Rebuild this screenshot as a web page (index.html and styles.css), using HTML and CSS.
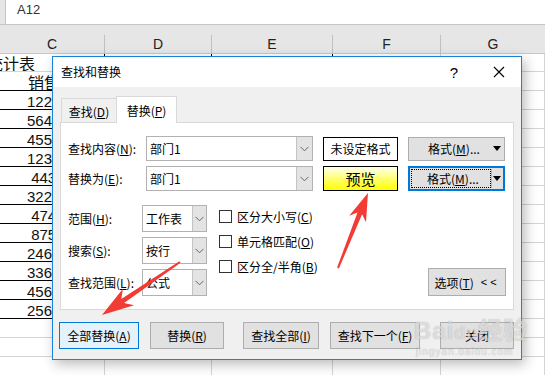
FILE: index.html
```html
<!DOCTYPE html>
<html lang="zh-CN">
<head>
<meta charset="utf-8">
<title>查找和替换</title>
<link rel="stylesheet" href="styles.css">
</head>
<body>
<div class="screen">
  <div class="fbar"><div class="fleft"></div><div class="namebox">A12</div></div>
  <div class="band"></div>
  <div class="colhead">
    <div class="ch">C</div><div class="ch">D</div><div class="ch">E</div><div class="ch">F</div><div class="ch last">G</div>
  </div>
  <div class="cells">
    <div class="row r1"><div class="cell tb"><span class="title">统计表</span></div><div class="cell tb"></div><div class="cell tb"></div><div class="cell"></div><div class="cell"></div></div>
    <div class="row t"><div class="cell tb head">销售额</div><div class="cell tb"></div><div class="cell tb"></div><div class="cell"></div><div class="cell"></div></div>
    <div class="row t"><div class="cell tb num">122350</div><div class="cell tb"></div><div class="cell tb"></div><div class="cell"></div><div class="cell"></div></div>
    <div class="row t"><div class="cell tb num">564120</div><div class="cell tb"></div><div class="cell tb"></div><div class="cell"></div><div class="cell"></div></div>
    <div class="row t"><div class="cell tb num">455300</div><div class="cell tb"></div><div class="cell tb"></div><div class="cell"></div><div class="cell"></div></div>
    <div class="row t"><div class="cell tb num">123560</div><div class="cell tb"></div><div class="cell tb"></div><div class="cell"></div><div class="cell"></div></div>
    <div class="row t"><div class="cell tb num">44320</div><div class="cell tb"></div><div class="cell tb"></div><div class="cell"></div><div class="cell"></div></div>
    <div class="row t"><div class="cell tb num">322450</div><div class="cell tb"></div><div class="cell tb"></div><div class="cell"></div><div class="cell"></div></div>
    <div class="row t"><div class="cell tb num">47410</div><div class="cell tb"></div><div class="cell tb"></div><div class="cell"></div><div class="cell"></div></div>
    <div class="row t"><div class="cell tb num">87560</div><div class="cell tb"></div><div class="cell tb"></div><div class="cell"></div><div class="cell"></div></div>
    <div class="row t"><div class="cell tb num">246780</div><div class="cell tb"></div><div class="cell tb"></div><div class="cell"></div><div class="cell"></div></div>
    <div class="row t"><div class="cell tb num">336900</div><div class="cell tb"></div><div class="cell tb"></div><div class="cell"></div><div class="cell"></div></div>
    <div class="row t"><div class="cell tb num">456210</div><div class="cell tb"></div><div class="cell tb"></div><div class="cell"></div><div class="cell"></div></div>
    <div class="row t"><div class="cell tb num">256340</div><div class="cell tb"></div><div class="cell tb"></div><div class="cell"></div><div class="cell"></div></div>
    <div class="row"><div class="cell"></div><div class="cell"></div><div class="cell"></div><div class="cell"></div><div class="cell"></div></div>
    <div class="row"><div class="cell"></div><div class="cell"></div><div class="cell"></div><div class="cell"></div><div class="cell"></div></div>
    <div class="row"><div class="cell"></div><div class="cell"></div><div class="cell"></div><div class="cell"></div><div class="cell"></div></div>
  </div>

  <div class="dialog">
    <div class="titlebar">
      <div class="dtitle">查找和替换</div>
      <div class="tbtn help">?</div>
      <div class="tbtn close"><svg width="12" height="12" viewBox="0 0 12 12"><path d="M1 1L11 11M11 1L1 11" stroke="#000" stroke-width="1.1" fill="none"/></svg></div>
    </div>
    <div class="dbody">
      <div class="tabs">
        <div class="tab"><span>查找(<u>D</u>)</span></div>
        <div class="tab active"><span>替换(<u>P</u>)</span></div>
      </div>
      <div class="panel">
        <div class="frow">
          <div class="lbl">查找内容(<u>N</u>):</div>
          <div class="combo"><span class="ctext">部门1</span><span class="dd"><svg width="9" height="6" viewBox="0 0 9 6"><path d="M0.5 0.8L4.5 4.8L8.5 0.8" stroke="#666" fill="none"/></svg></span></div>
          <div class="fmtbox">未设定格式</div>
          <div class="fmtbtn"><span class="ftext">格式(<u>M</u>)...</span><span class="farrow"><svg width="8" height="5" viewBox="0 0 8 5"><path d="M0 0H8L4 5Z" fill="#000"/></svg></span></div>
        </div>
        <div class="frow second">
          <div class="lbl">替换为(<u>E</u>):</div>
          <div class="combo"><span class="ctext">部门1</span><span class="dd"><svg width="9" height="6" viewBox="0 0 9 6"><path d="M0.5 0.8L4.5 4.8L8.5 0.8" stroke="#666" fill="none"/></svg></span></div>
          <div class="fmtbox preview">预览</div>
          <div class="fmtbtn focus"><span class="ftext"><span class="dots">格式(<u>M</u>)...</span></span><span class="farrow"><svg width="8" height="5" viewBox="0 0 8 5"><path d="M0 0H8L4 5Z" fill="#000"/></svg></span></div>
        </div>
        <div class="lower">
          <div class="lcol">
            <div class="lrow"><div class="lbl2">范围(<u>H</u>):</div><div class="select"><span class="ctext">工作表</span><span class="dd"><svg width="9" height="6" viewBox="0 0 9 6"><path d="M0.5 0.8L4.5 4.8L8.5 0.8" stroke="#666" fill="none"/></svg></span></div></div>
            <div class="lrow"><div class="lbl2">搜索(<u>S</u>):</div><div class="select"><span class="ctext">按行</span><span class="dd"><svg width="9" height="6" viewBox="0 0 9 6"><path d="M0.5 0.8L4.5 4.8L8.5 0.8" stroke="#666" fill="none"/></svg></span></div></div>
            <div class="lrow"><div class="lbl2">查找范围(<u>L</u>):</div><div class="select"><span class="ctext">公式</span><span class="dd"><svg width="9" height="6" viewBox="0 0 9 6"><path d="M0.5 0.8L4.5 4.8L8.5 0.8" stroke="#666" fill="none"/></svg></span></div></div>
          </div>
          <div class="ccol">
            <div class="chk"><span class="box"></span><span>区分大小写(<u>C</u>)</span></div>
            <div class="chk"><span class="box"></span><span>单元格匹配(<u>O</u>)</span></div>
            <div class="chk"><span class="box"></span><span>区分全/半角(<u>B</u>)</span></div>
          </div>
          <div class="btn optbtn"><span>选项(<u>T</u>)</span><span class="lt">&lt;&lt;</span></div>
        </div>
      </div>
      <div class="btnrow">
        <div class="btn def w1"><span>全部替换(<u>A</u>)</span></div>
        <div class="btn w2"><span>替换(<u>R</u>)</span></div>
        <div class="btn w3"><span>查找全部(<u>I</u>)</span></div>
        <div class="btn w4"><span>查找下一个(<u>F</u>)</span></div>
        <div class="btn w5"><span>关闭</span></div>
      </div>
    </div>
  </div>

  <svg class="arrows" width="545" height="375" viewBox="0 0 545 375">
    <polygon fill="#f23b35" points="368,193 366,222.3 362.1,214.3 338.9,268.4 337.1,267.6 357.5,212.5 349.2,215.7"/>
    <polygon fill="#f23b35" points="102,315 134.1,305.3 124.1,303.1 180.6,262.8 179.4,261.2 121.3,298.9 122.9,288.7"/>
  </svg>

  <div class="wm"><div class="wm-big">Bai<span class="paw">du</span>经验</div><div class="wm-small">jingyan.baidu.com</div></div>
</div>
</body>
</html>
```
FILE: styles.css
```css
* { box-sizing: border-box; }
html, body { margin: 0; padding: 0; background: #fff; }
.screen {
  position: relative;
  width: 545px;
  height: 375px;
  overflow: hidden;
  background: #fff;
  font-family: "Liberation Sans", "Noto Sans CJK SC", sans-serif;
}
u { text-decoration: underline; text-underline-offset: 1px; }

/* formula bar */
.fbar { height: 25px; display: flex; border-bottom: 1px solid #c6c6c6; background: #fff; }
.fleft { width: 6px; background: #e6e6e6; border-right: 1px solid #c6c6c6; }
.namebox { padding-left: 11px; font-size: 13px; line-height: 20px; color: #333; }
.band { height: 10px; background: #e6e6e6; }

/* column headers */
.colhead {
  height: 19px;
  display: grid;
  grid-template-columns: 105px 107px 121px 108px 1fr;
  background: #e6e6e6;
  border-bottom: 1px solid #c8c8c8;
}
.ch {
  border-right: 1px solid #c0c0c0;
  text-align: center;
  font-size: 14px;
  line-height: 19px;
  color: #222;
}
.ch.last { border-right: none; }

/* cells */
.cells { display: flex; flex-direction: column; }
.row {
  display: grid;
  grid-template-columns: 105px 107px 121px 108px 1fr;
  height: 19px;
}
.row.r1 { height: 18px; }
.cell {
  border-right: 1px solid #d4d4d4;
  border-bottom: 1px solid #d4d4d4;
  display: flex;
  align-items: flex-end;
  overflow: hidden;
  white-space: nowrap;
  color: #111;
}
.row.t .cell.tb { border-bottom-color: #000; border-right-color: #000; }
.row.r1 .cell.tb { border-right-color: #000; }
.title { font-family: "Noto Sans CJK SC", sans-serif; font-size: 16px; line-height: 16px; text-indent: -13px; display: block; }
.head { font-family: "Noto Sans CJK SC", sans-serif; font-size: 16px; line-height: 16px; justify-content: center; }
.num { font-size: 15px; line-height: 15px; justify-content: center; }

/* dialog */
.dialog {
  position: absolute;
  left: 52px;
  top: 56px;
  width: 470px;
  height: 304px;
  border: 1px solid #1883d7;
  background: #f0f0f0;
  box-shadow: 3px 4px 12px rgba(0, 0, 0, 0.28);
  font-family: "Noto Sans CJK SC", sans-serif;
  font-size: 12px;
  color: #000;
  display: flex;
  flex-direction: column;
}
.titlebar { height: 30px; background: #fff; display: flex; align-items: center; padding-left: 8px; }
.dtitle { flex: 1; line-height: 30px; }
.tbtn { height: 30px; display: flex; align-items: center; justify-content: center; }
.help { width: 46px; font-family: "Liberation Sans", sans-serif; font-size: 15px; }
.close { width: 44px; }

.dbody { flex: 1; padding: 9px 7px 10px 7px; display: flex; flex-direction: column; }
.tabs { display: flex; align-items: flex-end; height: 26px; padding-left: 1px; }
.tab {
  width: 56px;
  height: 24px;
  border: 1px solid #d9d9d9;
  border-bottom: none;
  background: #f0f0f0;
  display: flex;
  align-items: center;
  justify-content: center;
  padding-top: 2px;
}
.tab.active {
  width: 61px;
  height: 27px;
  margin-left: -1px;
  margin-bottom: -1px;
  background: #fff;
  position: relative;
  z-index: 1;
  padding-top: 0;
}
.panel {
  background: #fff;
  border: 1px solid #d9d9d9;
  padding: 13px 7px 13px 7px;
}
.frow { display: flex; align-items: center; height: 25px; }
.frow.second { margin-top: 5px; }
.lbl { width: 78px; white-space: nowrap; }
.combo, .select {
  height: 25px;
  border: 1px solid #b2b2b2;
  background: #fff;
  display: flex;
  align-items: center;
}
.combo { width: 167px; }
.ctext { padding-left: 3px; flex: 1; white-space: nowrap; }
.dd {
  width: 16px;
  align-self: stretch;
  background: #e3e3e3;
  border-left: 1px solid #c4c4c4;
  display: flex;
  align-items: center;
  justify-content: center;
}
.fmtbox {
  margin-left: 10px;
  width: 75px;
  height: 24px;
  border: 1px solid #000;
  background: #fff;
  display: flex;
  align-items: center;
  justify-content: center;
}
.fmtbox.preview {
  height: 25px;
  font-size: 15px;
  background: linear-gradient(to bottom, #ffffee 0%, #ffff80 45%, #ffff00 100%);
}
.fmtbtn {
  margin-left: 10px;
  width: 97px;
  height: 24px;
  background: #e1e1e1;
  border: 1px solid #adadad;
  display: flex;
  align-items: center;
}
.ftext { flex: 1; text-align: center; padding-left: 8px; white-space: nowrap; }
.farrow { width: 13px; display: flex; align-items: center; justify-content: center; padding-right: 2px; }
.fmtbtn.focus { height: 25px; border: 2px solid #0078d7; padding: 1px 0 1px 1px; }
.fmtbtn.focus .ftext {
  align-self: stretch;
  border: 1px dotted #000;
  display: flex;
  align-items: center;
  justify-content: center;
  padding-left: 4px;
}
.fmtbtn.focus .farrow { border-left: 1px solid #b8b8b8; align-self: stretch; width: 12px; }

.lower { display: flex; margin-top: 13px; }
.lcol { display: flex; flex-direction: column; gap: 5px; padding-top: 1px; }
.lrow { display: flex; align-items: center; height: 27px; }
.lbl2 { width: 74px; white-space: nowrap; }
.select { width: 65px; height: 27px; }
.select .dd { width: 14px; }
.ccol { margin-left: 12px; display: flex; flex-direction: column; }
.chk { height: 25px; display: flex; align-items: center; gap: 5px; white-space: nowrap; }
.box { width: 13px; height: 13px; border: 1px solid #333; background: #fff; }

.btn {
  height: 27px;
  background: #e1e1e1;
  border: 1px solid #adadad;
  display: flex;
  align-items: center;
  justify-content: center;
  white-space: nowrap;
}
.btn.def { background: #e5f1fb; border-color: #0078d7; }
.optbtn { margin-left: auto; align-self: flex-end; width: 78px; height: 28px; }
.optbtn .lt { margin-left: 7px; letter-spacing: 3px; font-family: "Liberation Sans", sans-serif; font-size: 11px; }

.btnrow { display: flex; margin-top: 12px; margin-left: -1px; }
.w1 { width: 80px; }
.w2 { width: 74px; margin-left: 11px; }
.w3 { width: 76px; margin-left: 19px; }
.w4 { width: 90px; margin-left: 11px; }
.w5 { width: 74px; margin-left: 20px; }

/* annotation overlays */
.arrows { position: absolute; left: 0; top: 0; pointer-events: none; }
.wm {
  position: absolute;
  left: 414px;
  top: 318px;
  color: rgba(255, 255, 255, 0.6);
  text-shadow: 0 0 1px rgba(0, 0, 0, 0.3);
  pointer-events: none;
  font-family: "Liberation Sans", "Noto Sans CJK SC", sans-serif;
}
.wm-big { font-size: 24px; font-weight: bold; line-height: 26px; letter-spacing: 1px; }
.paw { font-size: 18px; }
.wm-small { font-size: 10px; line-height: 12px; letter-spacing: 1px; padding-left: 2px; }
```
